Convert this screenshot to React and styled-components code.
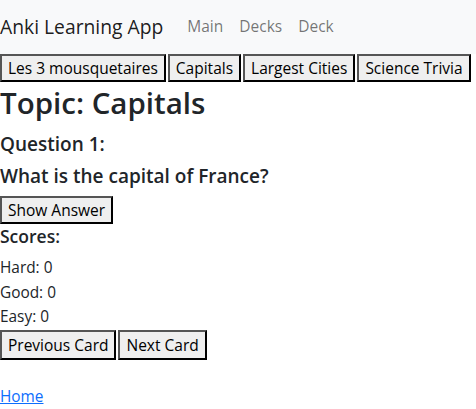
import React from "react";
import styled, { createGlobalStyle } from "styled-components";

const GlobalStyle = createGlobalStyle`
  body {
    margin: 0;
    font-family: "Open Sans", "Noto Sans", sans-serif;
    font-size: 16px;
    line-height: 1.5;
    color: #212529;
    background: #fff;
  }
`;

const Nav = styled.nav`
  height: 54px;
  background: #f8f9fa;
  display: flex;
  align-items: center;
`;

const Brand = styled.span`
  font-size: 19.3px;
  color: rgba(0, 0, 0, 0.9);
  margin-right: 16px;
`;

const NavLink = styled.span`
  padding: 0 8px;
  font-size: 15.5px;
  color: rgba(0, 0, 0, 0.55);
`;

const ButtonRow = styled.div`
  display: flex;
  gap: 2px;
`;

const Btn = styled.button`
  flex: none;
  display: block;
  box-sizing: border-box;
  height: ${(p) => (p.$tall ? 30 : 28)}px;
  white-space: nowrap;
  font-family: inherit;
  font-size: 15.5px;
  line-height: 20px;
  color: #000;
  background: #efefef;
  border: 2px solid;
  border-color: #555 #000 #000 #555;
  padding: 0 6px;
  margin: 0;
`;

const Title = styled.h1`
  font-size: 29.5px;
  font-weight: 600;
  line-height: 35px;
  margin: 3px 0 12px;
`;

const Heading = styled.h5`
  font-size: ${(p) => p.$size || 19}px;
  font-weight: 600;
  line-height: 24px;
  margin: 0 0 8px;
`;

const Score = styled.div`
  font-size: 15.4px;
  line-height: 24.5px;
`;

const Home = styled.a`
  display: block;
  margin-top: 25px;
  font-size: 15.4px;
  color: #0d6efd;
  text-decoration: underline;
`;

const topics = ["Les 3 mousquetaires", "Capitals", "Largest Cities", "Science Trivia"];

export default function App() {
  return (
    <>
      <GlobalStyle />
      <Nav>
        <Brand>Anki Learning App</Brand>
        <NavLink>Main</NavLink>
        <NavLink>Decks</NavLink>
        <NavLink>Deck</NavLink>
      </Nav>
      <ButtonRow>
        {topics.map((t) => (
          <Btn key={t}>{t}</Btn>
        ))}
      </ButtonRow>
      <Title>Topic: Capitals</Title>
      <Heading>Question 1:</Heading>
      <Heading>What is the capital of France?</Heading>
      <Btn>Show Answer</Btn>
      <Heading $size={17.5}>Scores:</Heading>
      <Score>Hard: 0</Score>
      <Score>Good: 0</Score>
      <Score>Easy: 0</Score>
      <ButtonRow>
        <Btn $tall>Previous Card</Btn>
        <Btn $tall>Next Card</Btn>
      </ButtonRow>
      <Home href="#">Home</Home>
    </>
  );
}
